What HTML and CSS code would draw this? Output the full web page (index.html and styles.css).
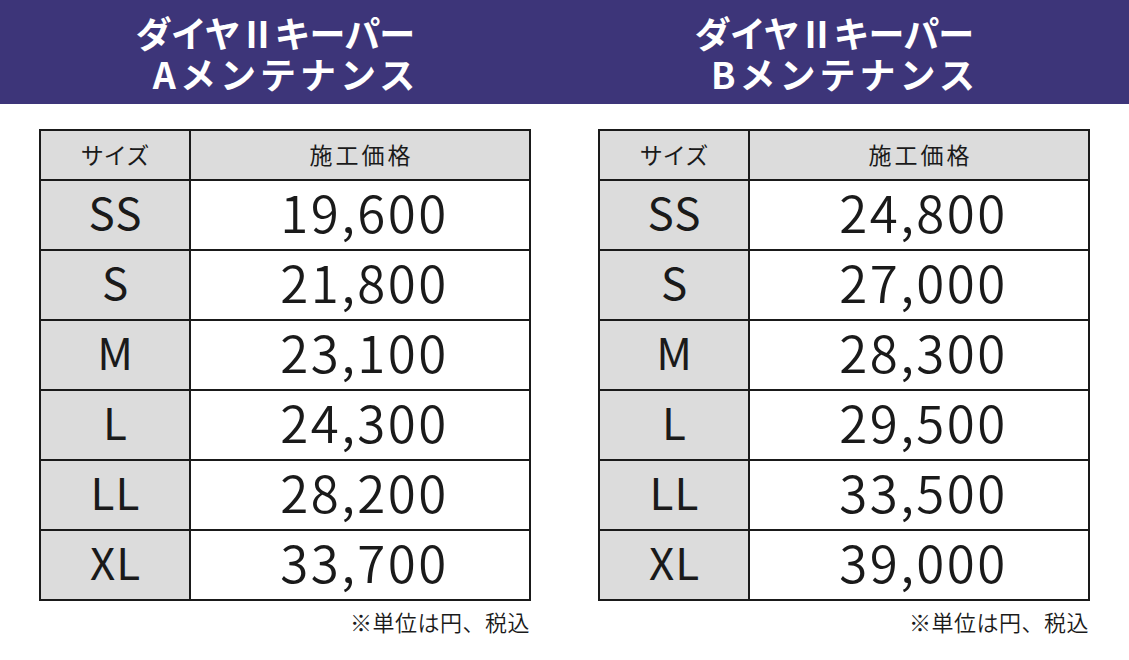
FILE: index.html
```html
<!DOCTYPE html>
<html lang="ja">
<head>
<meta charset="utf-8">
<title>ダイヤⅡキーパー メンテナンス料金</title>
<link rel="stylesheet" href="styles.css">
</head>
<body>
<header class="band">
  <div class="band-cell"><h2 class="title"><span class="t1">ダイヤⅡキーパー</span><span class="t2">Aメンテナンス</span></h2></div>
  <div class="band-cell"><h2 class="title"><span class="t1">ダイヤⅡキーパー</span><span class="t2">Bメンテナンス</span></h2></div>
</header>
<main class="tables">
  <section class="panel">
    <div class="grid">
      <div class="cell head">サイズ</div><div class="cell head price-head">施工価格</div>
      <div class="cell size">SS</div><div class="cell price">19,600</div>
      <div class="cell size">S</div><div class="cell price">21,800</div>
      <div class="cell size">M</div><div class="cell price">23,100</div>
      <div class="cell size">L</div><div class="cell price">24,300</div>
      <div class="cell size">LL</div><div class="cell price">28,200</div>
      <div class="cell size">XL</div><div class="cell price">33,700</div>
    </div>
    <p class="note">※単位は円、税込</p>
  </section>
  <section class="panel">
    <div class="grid">
      <div class="cell head">サイズ</div><div class="cell head price-head">施工価格</div>
      <div class="cell size">SS</div><div class="cell price">24,800</div>
      <div class="cell size">S</div><div class="cell price">27,000</div>
      <div class="cell size">M</div><div class="cell price">28,300</div>
      <div class="cell size">L</div><div class="cell price">29,500</div>
      <div class="cell size">LL</div><div class="cell price">33,500</div>
      <div class="cell size">XL</div><div class="cell price">39,000</div>
    </div>
    <p class="note">※単位は円、税込</p>
  </section>
</main>
</body>
</html>
```

FILE: styles.css
```css
* { box-sizing: border-box; }
html, body { margin: 0; padding: 0; background: #ffffff; }
body {
  font-family: "Noto Sans CJK JP", "Noto Sans", sans-serif;
  color: #1a1a1a;
  width: 1129px;
  height: 660px;
  overflow: hidden;
}
.band {
  height: 104px;
  background: #3d3579;
  display: grid;
  grid-template-columns: 492px 492px;
  column-gap: 67px;
  padding-left: 39px;
}
.band-cell {
  display: flex;
  justify-content: center;
  padding-right: 20px;
  padding-top: 12px;
}
.title {
  margin: 0;
  color: #ffffff;
  font-size: 36px;
  font-weight: 700;
  line-height: 41px;
  text-align: center;
  display: flex;
  flex-direction: column;
  align-items: center;
}
.t1 { letter-spacing: -1px; }
.t2 { letter-spacing: 4px; padding-left: 22px; }
.tables {
  display: grid;
  grid-template-columns: 492px 492px;
  column-gap: 67px;
  padding-left: 39px;
  padding-top: 25px;
}
.grid {
  display: grid;
  grid-template-columns: 148px 1fr;
  grid-template-rows: 48px repeat(6, 68px);
  gap: 2px;
  padding: 2px;
  background: #1a1a1a;
}
.cell {
  display: flex;
  align-items: center;
  justify-content: center;
  background: #ffffff;
}
.head {
  background: #dcdcdc;
  font-size: 23px;
  font-weight: 400;
  padding-bottom: 2px;
}
.price-head { letter-spacing: 3px; padding-left: 3px; }
.size {
  background: #dcdcdc;
  font-size: 44px;
  font-weight: 400;
  letter-spacing: 1px;
  padding-left: 1px;
  padding-bottom: 8px;
}
.price {
  font-size: 51px;
  font-weight: 350;
  letter-spacing: 2.5px;
  padding-left: 9px;
  padding-bottom: 8px;
}
.note {
  margin: 7px 1px 0 0;
  text-align: right;
  font-size: 22px;
  line-height: 26px;
  font-weight: 350;
  letter-spacing: 0.5px;
}
```
